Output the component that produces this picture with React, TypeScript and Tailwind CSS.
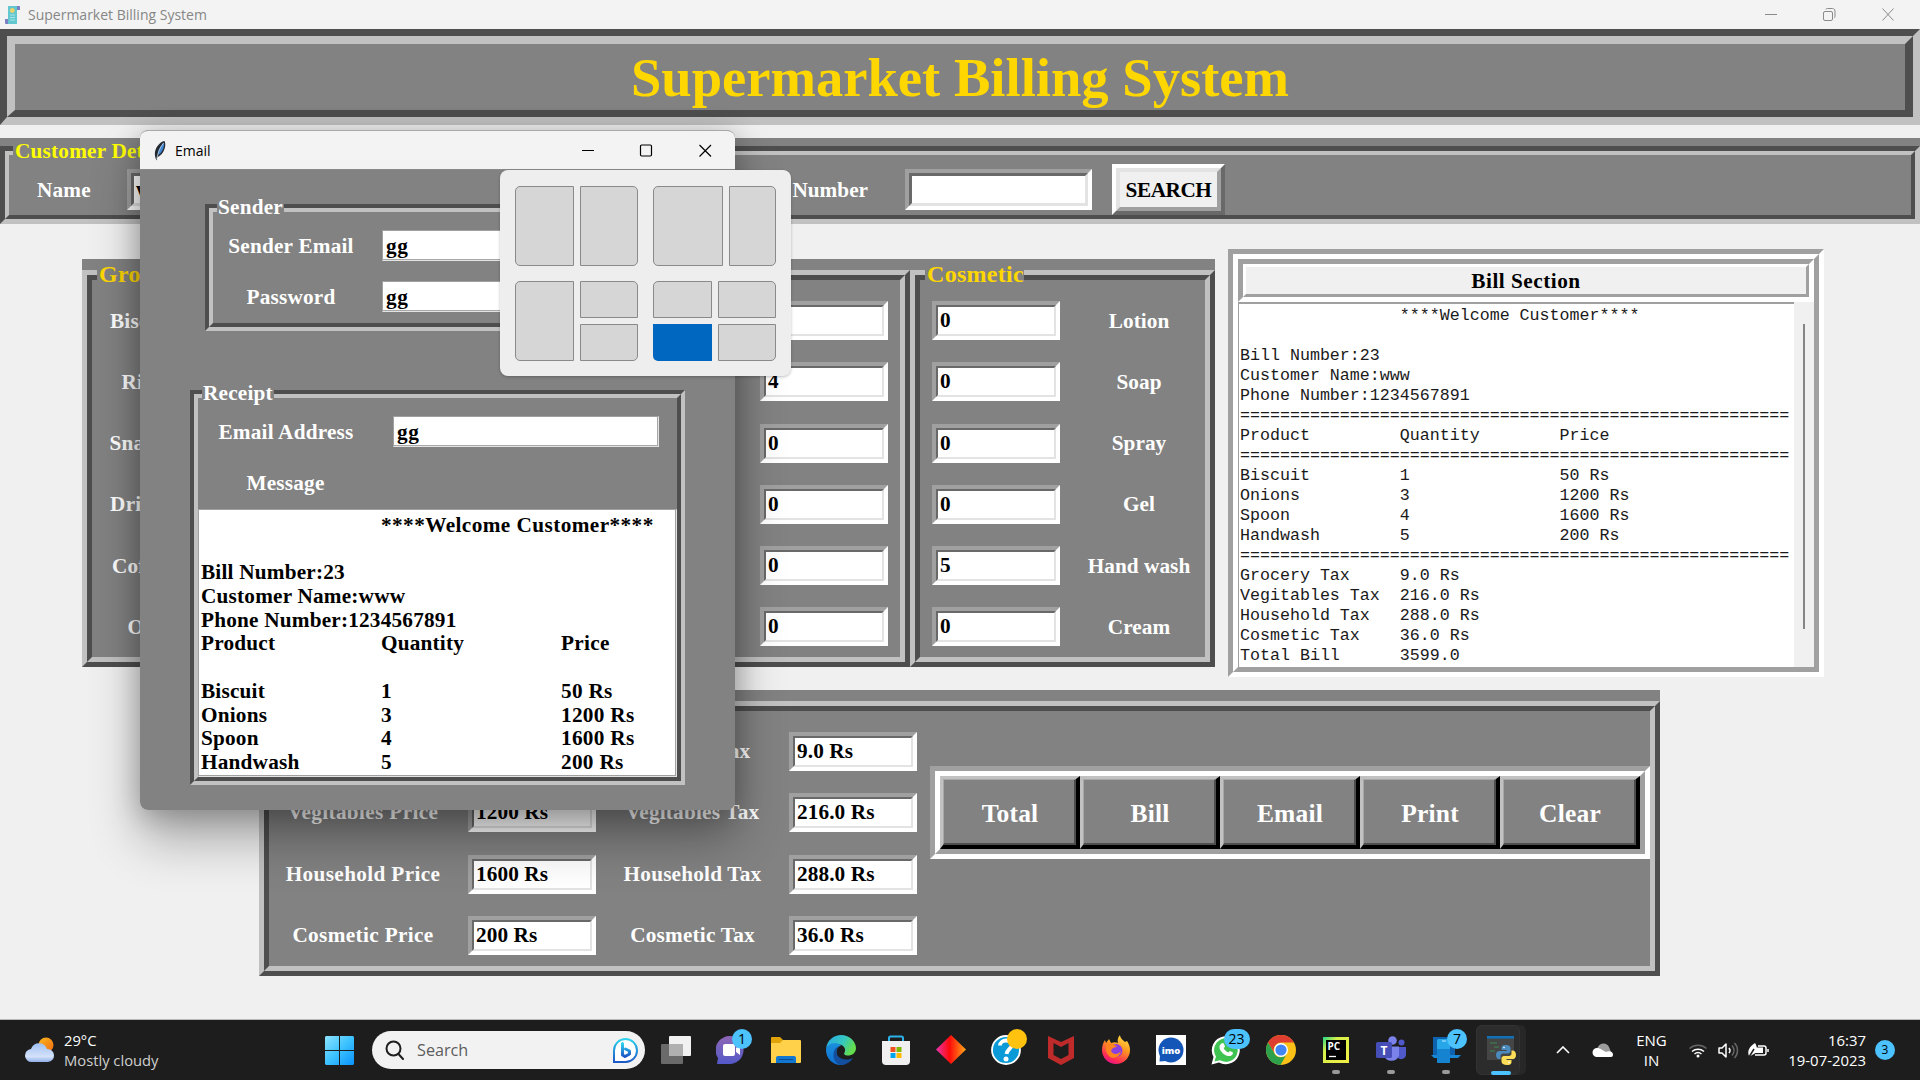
import React from "react";

type Kids = { children?: React.ReactNode };

/* ---------- bevelled boxes ---------- */

function Bevel({ outer, inner, className = "", body = "", children }: Kids & { outer: string; inner: string; className?: string; body?: string }) {
  return (
    <div className={`box-border ${outer} ${className}`}>
      <div className={`box-border h-full w-full ${inner} ${body}`}>{children}</div>
    </div>
  );
}

const sunkenOuter = "border-4 border-t-[#a0a0a0] border-l-[#a0a0a0] border-r-white border-b-white";

function Entry({ value = "", className = "" }: { value?: string; className?: string }) {
  return (
    <Bevel
      outer={sunkenOuter}
      inner="border-2 border-t-[#696969] border-l-[#696969] border-r-[#e3e3e3] border-b-[#e3e3e3]"
      className={`h-[39px] w-[128px] shrink-0 ${className}`}
      body="bg-white pl-[2px] leading-[26px] text-black whitespace-pre tracking-[0.1px]"
    >
      {value}
    </Bevel>
  );
}

function ThinEntry({ value, className }: { value: string; className: string }) {
  return (
    <div className={`h-[31px] shrink-0 border border-t-[#a0a0a0] border-l-[#a0a0a0] border-r-[#e3e3e3] border-b-[#e3e3e3] ${className}`}>
      <div className="h-full border-r border-b border-r-[#a8a8a8] border-b-[#a8a8a8] bg-white pl-[3px] leading-[30px] text-black tracking-[0.5px]">{value}</div>
    </div>
  );
}

const ridgeOuter = "border-[5px] border-t-[#c1c1c1] border-l-[#c1c1c1] border-r-[#4e4e4e] border-b-[#4e4e4e]";
const ridgeInner = "border-[5px] border-t-[#4e4e4e] border-l-[#4e4e4e] border-r-[#c1c1c1] border-b-[#c1c1c1]";

function RidgePanel({ title, className, body = "", children }: Kids & { title: string; className: string; body?: string }) {
  return (
    <div className={`relative bg-[#828282] pt-[11px] ${className}`}>
      <Bevel outer={ridgeOuter} inner={ridgeInner} className="h-full" body={body}>
        {children}
      </Bevel>
      {title && <span className="absolute left-[15px] top-[1px] bg-[#828282] pl-[2px] text-[24px] leading-[29px] tracking-[0.3px] text-[#ffd700]">{title}</span>}
    </div>
  );
}

function GroovePanel({ title, className, body = "", children }: Kids & { title: string; className: string; body?: string }) {
  return (
    <div className={`relative ${className}`}>
      <Bevel
        outer="border-4 border-t-[#4e4e4e] border-l-[#4e4e4e] border-r-[#c1c1c1] border-b-[#c1c1c1]"
        inner="border-4 border-t-[#c1c1c1] border-l-[#c1c1c1] border-r-[#4e4e4e] border-b-[#4e4e4e]"
        className="h-full"
        body={body}
      >
        {children}
      </Bevel>
      <span className="absolute left-[12px] -top-[9px] bg-[#828282] px-[1px] leading-[25px]">{title}</span>
    </div>
  );
}

/* ---------- main window ---------- */

function TitleBar() {
  return (
    <div className="flex h-[29px] items-center bg-[#f3f3f3] font-['Open_Sans',sans-serif] text-[14px] font-normal tracking-normal text-[#868686]">
      <svg className="ml-[5px] h-5 w-[15px]" viewBox="0 0 15 20">
        <path d="M3 1h11a1 1 0 0 1 1 1v3h-3v14H3z" fill="#63c7cf" />
        <path d="M12 1h2a1 1 0 0 1 1 1v3h-3zM0 14h3v5H1a1 1 0 0 1-1-1z" fill="#7d7fc4" />
        <circle cx="7.3" cy="5.5" r="2.4" fill="#ecd26b" />
        <path d="M5 10h5M5 12.5h5M5 15h5" stroke="#a9e6e8" strokeWidth="1" />
      </svg>
      <span className="ml-2">Supermarket Billing System</span>
      <svg className="ml-auto mr-[26px] h-[13px] w-[130px]" viewBox="0 0 130 13" fill="none" stroke="#8a8a8a">
        <path d="M1 6.5h12M118.5 .5l11 12M129.500 .5l-11 12" />
        <rect x="59.500" y="3.500" width="9" height="9" rx="1.500" />
        <path d="M62 1.500c0-1 .5-1 1.500-1h5c1.500 0 2.500 1 2.500 2.500v5c0 1 0 1.500-1 1.500" />
      </svg>
    </div>
  );
}

function CustomerBar() {
  return (
    <div className="relative mt-[13px] h-[86px] bg-[#828282] pt-2">
      <Bevel
        outer="border-[5px] border-t-[#4e4e4e] border-l-[#4e4e4e] border-r-[#c1c1c1] border-b-[#c1c1c1]"
        inner="border-4 border-t-[#c1c1c1] border-l-[#c1c1c1] border-r-[#4e4e4e] border-b-[#4e4e4e]"
        className="h-full"
        body="flex items-start text-white"
      >
        <span className="ml-[28px] mt-[23px] w-[90px] leading-[24px]">Name</span>
        <Bevel outer={sunkenOuter} inner="border-[3px] border-t-[#696969] border-l-[#696969] border-r-[#e3e3e3] border-b-[#e3e3e3]" className="mt-[14px] h-[41px] w-[187px]" body="bg-white pl-[2px] leading-[27px] text-black">
          www
        </Bevel>
        <span className="ml-[400px] mt-[23px] w-[154px] whitespace-nowrap text-right leading-[24px] tracking-normal">Bill Number</span>
        <Bevel outer={sunkenOuter} inner="border-[3px] border-t-[#696969] border-l-[#696969] border-r-[#e3e3e3] border-b-[#e3e3e3]" className="ml-[37px] mt-[14px] h-[41px] w-[187px]" body="bg-white" />
        <Bevel
          outer="border-4 border-t-white border-l-white border-r-[#696969] border-b-[#696969]"
          inner="border-4 border-t-[#e3e3e3] border-l-[#e3e3e3] border-r-[#a0a0a0] border-b-[#a0a0a0]"
          className="ml-[20px] mt-[9px] h-[51px] w-[113px]"
          body="bg-[#f0f0f0] text-center leading-[36px] text-black tracking-[-0.45px]"
        >
          SEARCH
        </Bevel>
      </Bevel>
      <span className="absolute left-[13px] top-[1px] bg-[#828282] px-[2px] leading-[24px] text-[#ffff00]">Customer Details</span>
    </div>
  );
}

const groceries = ["Biscuit", "Rice", "Snacks", "Drinks", "Coffee", "Oil"];
const household = ["0", "4", "0", "0", "0", "0"];
const cosmetics: [string, string][] = [["0", "Lotion"], ["0", "Soap"], ["0", "Spray"], ["0", "Gel"], ["5", "Hand wash"], ["0", "Cream"]];

function ProductPanels() {
  return (
    <div className="flex h-[408px] text-white">
      <RidgePanel title="Grocery" className="w-[520px]" body="flex flex-col pt-[21px] gap-[22.25px]">
        {groceries.map((g) => (
          <div key={g} className="flex h-[39px] items-center">
            <span className="w-[100px] pt-[2px] text-center">{g}</span>
            <Entry value="1" />
          </div>
        ))}
      </RidgePanel>
      <RidgePanel title="Household" className="w-[308px]" body="flex flex-col items-end pr-3 pt-[21px] gap-[22.25px]">
        {household.map((v, i) => (
          <Entry key={i} value={v} />
        ))}
      </RidgePanel>
      <RidgePanel title="Cosmetic" className="w-[305px]" body="flex flex-col pl-3 pt-[21px] gap-[22.25px]">
        {cosmetics.map(([v, l]) => (
          <div key={l} className="flex h-[39px] items-center">
            <Entry value={v} />
            <span className="ml-[13px] w-[132px] pt-[2px] text-center tracking-[0.05px]">{l}</span>
          </div>
        ))}
      </RidgePanel>
    </div>
  );
}

const rule = "=".repeat(55);
const row = (a: string, b: string, c = "") => a.padEnd(16) + (c ? b.padEnd(16) : b) + c;
const billText = [
  row("", "****Welcome Customer****"),
  "",
  "Bill Number:23",
  "Customer Name:www",
  "Phone Number:1234567891",
  rule,
  row("Product", "Quantity", "Price"),
  rule,
  row("Biscuit", "1", "50 Rs"),
  row("Onions", "3", "1200 Rs"),
  row("Spoon", "4", "1600 Rs"),
  row("Handwash", "5", "200 Rs"),
  rule,
  row("Grocery Tax", "9.0 Rs"),
  row("Vegitables Tax", "216.0 Rs"),
  row("Household Tax", "288.0 Rs"),
  row("Cosmetic Tax", "36.0 Rs"),
  row("Total Bill", "3599.0"),
].join("\n");

const grooveOuter = "border-[5px] border-t-[#a0a0a0] border-l-[#a0a0a0] border-r-white border-b-white";
const grooveInner = "border-[5px] border-t-white border-l-white border-r-[#a0a0a0] border-b-[#a0a0a0]";

function BillSection() {
  return (
    <Bevel outer={grooveOuter} inner={grooveInner} className="ml-[13px] h-[428px] w-[596px]" body="flex flex-col">
      <Bevel
        outer={grooveOuter}
        inner="border-[3px] border-t-white border-l-white border-r-[#a0a0a0] border-b-[#a0a0a0]"
        className="h-[43px] w-full"
        body="bg-[#f0f0f0] text-center leading-[29px] text-black tracking-[0.5px]"
      >
        Bill Section
      </Bevel>
      <div className="flex min-h-0 grow">
        <pre className="w-[556px] overflow-hidden border-t-2 border-l border-t-[#a0a0a0] border-l-[#a0a0a0] bg-white pl-[1px] pt-[2px] font-['Liberation_Mono',monospace] text-[16.650px] font-normal leading-[20px] tracking-normal text-[#1a1a1a]">{billText}</pre>
        <div className="flex grow justify-center bg-[#f0f0f0] pt-[22px]">
          <div className="h-[305px] w-[2px] bg-[#858585]" />
        </div>
      </div>
    </Bevel>
  );
}

const totals: [string, string, string, string][] = [
  ["Grocery Price", "50 Rs", "Grocery Tax", "9.0 Rs"],
  ["Vegitables Price", "1200 Rs", "Vegitables Tax", "216.0 Rs"],
  ["Household Price", "1600 Rs", "Household Tax", "288.0 Rs"],
  ["Cosmetic Price", "200 Rs", "Cosmetic Tax", "36.0 Rs"],
];

function BillMenu() {
  return (
    <RidgePanel title="Bill Menu" className="ml-[259px] mt-[13px] h-[286px] w-[1401px] text-white" body="flex items-start">
      <div className="flex flex-col gap-[22.25px] pt-[21px]">
        {totals.map(([a, b, c, d]) => (
          <div key={a} className="flex h-[39px] items-center">
            <span className="w-[188px] pt-[1px] text-center tracking-[0.35px]">{a}</span>
            <Entry value={b} className="ml-[11px]" />
            <span className="w-[193px] pt-[1px] text-center tracking-[0.2px]">{c}</span>
            <Entry value={d} />
          </div>
        ))}
      </div>
      <Bevel outer={grooveOuter} inner={grooveInner} className="ml-[13px] mt-[55px] h-[93px] w-[720px]" body="flex">
        {["Total", "Bill", "Email", "Print", "Clear"].map((b) => (
          <Bevel
            key={b}
            outer="border-t-[3px] border-l-[3px] border-r-4 border-b-4 border-t-[#c1c1c1] border-l-[#c1c1c1] border-r-black border-b-black"
            inner="border-t border-l border-r-2 border-b-2 border-t-[#a8a8a8] border-l-[#a8a8a8] border-r-[#4e4e4e] border-b-[#4e4e4e]"
            className="h-full flex-1"
            body="bg-[#828282] pl-[2px] text-center text-[25.500px] leading-[67px]"
          >
            {b}
          </Bevel>
        ))}
      </Bevel>
    </RidgePanel>
  );
}

/* ---------- e-mail dialog ---------- */

const mailRows: [string, string, string][] = [
  ["", "****Welcome Customer****", ""],
  ["", "", ""],
  ["Bill Number:23", "", ""],
  ["Customer Name:www", "", ""],
  ["Phone Number:1234567891", "", ""],
  ["Product", "Quantity", "Price"],
  ["", "", ""],
  ["Biscuit", "1", "50 Rs"],
  ["Onions", "3", "1200 Rs"],
  ["Spoon", "4", "1600 Rs"],
  ["Handwash", "5", "200 Rs"],
];

function EmailDialog() {
  return (
    <div className="absolute left-[140px] top-[130px] flex h-[680px] w-[595px] flex-col overflow-hidden rounded-[8px] border-t border-t-[#a8a8a8] bg-[#828282] text-white">
      <div className="flex h-[39px] shrink-0 items-center border-b border-b-[#8a8a8a] bg-[#f3f3f3] font-['Open_Sans',sans-serif] text-[14px] font-normal tracking-normal text-black">
        <svg className="ml-[13px] h-[21px] w-[14px]" viewBox="0 0 14 21">
          <path d="M11.500 1c1.500 3 .8 8-2 12-1.500 2-3.500 3.500-5 4L3.500 20.500C1 15 1.500 10 4.500 6 6.500 3.500 9 1 11.500 1z" fill="#242a33" />
          <path d="M11 2.500c.5 3-.5 7-3 10-1 1.400-2 2-3 2.500 0-4 1.500-8 6-12.500z" fill="#3f86d6" />
          <path d="M10.500 3C7 7.500 5 12 3.800 19" stroke="#cfd8e2" strokeWidth=".8" fill="none" />
        </svg>
        <span className="ml-[8px]">Email</span>
        <svg className="ml-auto mr-[23px] h-[13px] w-[131px]" viewBox="0 0 131 13" fill="none" stroke="#000" strokeWidth="1.200">
          <path d="M1 6.500h12" />
          <rect x="59.500" y="1" width="11" height="11" rx="1.200" />
          <path d="M118.500 1l11.500 11.500M130 1l-11.500 11.500" />
        </svg>
      </div>
      <GroovePanel title="Sender" className="ml-[65px] mt-[34px] h-[127px] w-[450px]" body="flex flex-col gap-[20px] pt-[18px]">
        <div className="flex h-[31px] items-center">
          <span className="w-[156px] pt-[2px] text-center">Sender Email</span>
          <ThinEntry value="gg" className="ml-[13px] w-[260px]" />
        </div>
        <div className="flex h-[31px] items-center">
          <span className="w-[156px] pt-[2px] text-center">Password</span>
          <ThinEntry value="gg" className="ml-[13px] w-[260px]" />
        </div>
      </GroovePanel>
      <GroovePanel title="Receipt" className="ml-[50px] mt-[59px] h-[395px] w-[495px]" body="flex flex-col">
        <div className="mt-[18px] flex h-[31px] items-center">
          <span className="w-[176px] pt-[2px] text-center">Email Address</span>
          <ThinEntry value="gg" className="ml-[19px] w-[266px]" />
        </div>
        <div className="mt-[21px] w-[175px] text-center leading-[31px]">Message</div>
        <div className="mt-auto h-[268px] border border-t-[#a0a0a0] border-l-[#a0a0a0] border-r-[#e3e3e3] border-b-[#e3e3e3]">
          <div className="flex h-full flex-col border-r border-b border-r-[#a0a0a0] border-b-[#a0a0a0] bg-white pl-[2px] pt-[2.500px] text-black">
            {mailRows.map(([a, b, c], i) => (
              <div key={i} className="flex h-[23.75px] whitespace-nowrap leading-[24px]">
                <span className="w-[180px]">{a}</span>
                <span className={b.startsWith("*") ? "w-[180px] tracking-[0.420px]" : "w-[180px]"}>{b}</span>
                <span className="tracking-[0.300px]">{c}</span>
              </div>
            ))}
          </div>
        </div>
      </GroovePanel>
    </div>
  );
}

function SnapPopup() {
  const cell = "border border-[#8a8a8a] bg-[#d6d6d6]";
  return (
    <div className="absolute left-[500px] top-[170px] grid h-[206px] w-[291px] grid-cols-[123px_123px] grid-rows-[80px_80px] gap-x-[15px] gap-y-[15px] rounded-[8px] bg-[#eee] pl-[15px] pt-4 shadow-[0_1px_3px_rgba(0,0,0,0.25)]">
      <div className="flex gap-1.5">
        <div className={`w-[59px] rounded-l-[5px] ${cell}`} />
        <div className={`grow rounded-r-[5px] ${cell}`} />
      </div>
      <div className="flex gap-1.5">
        <div className={`w-[70px] rounded-l-[5px] ${cell}`} />
        <div className={`grow rounded-r-[5px] ${cell}`} />
      </div>
      <div className="flex gap-1.5">
        <div className={`w-[59px] rounded-l-[5px] ${cell}`} />
        <div className="flex grow flex-col gap-1.5">
          <div className={`flex-1 rounded-tr-[5px] ${cell}`} />
          <div className={`flex-1 rounded-br-[5px] ${cell}`} />
        </div>
      </div>
      <div className="grid grid-cols-[59px_58px] grid-rows-2 gap-1.5">
        <div className={`rounded-tl-[5px] ${cell}`} />
        <div className={`rounded-tr-[5px] ${cell}`} />
        <div className="rounded-bl-[5px] bg-[#0067c0]" />
        <div className={`rounded-br-[5px] ${cell}`} />
      </div>
    </div>
  );
}

/* ---------- taskbar ---------- */

function TaskIcon({ children, badge, badgeClass = "", running = false }: Kids & { badge?: string; badgeClass?: string; running?: boolean }) {
  return (
    <div className="relative flex h-full w-[55px] shrink-0 items-center justify-center">
      <svg className="h-[30px] w-[30px]" viewBox="0 0 30 30">{children}</svg>
      {badge !== undefined && (
        <span className={`absolute top-[9px] flex h-5 items-center justify-center rounded-full text-[14px] leading-none text-black ${badgeClass}`}>{badge}</span>
      )}
      {running && <span className="absolute bottom-[6px] h-1 w-2 rounded-full bg-[#9a9a9a]" />}
    </div>
  );
}

function Taskbar() {
  return (
    <div className="flex h-[60px] items-center bg-[#1d1d1d] font-['Open_Sans',sans-serif] text-[14.500px] text-white">
      <svg className="ml-[24px] h-[28px] w-[32px]" viewBox="0 0 32 28">
        <defs>
          <linearGradient id="sun" x1="0" y1="0" x2="1" y2="1"><stop offset="0" stopColor="#fbb81f" /><stop offset="1" stopColor="#f06a12" /></linearGradient>
          <linearGradient id="cl" x1="0" y1="0" x2="0" y2="1"><stop offset="0" stopColor="#9fc0f3" /><stop offset=".7" stopColor="#d4e2fa" /><stop offset="1" stopColor="#8fb0ea" /></linearGradient>
        </defs>
        <circle cx="22" cy="9" r="7.500" fill="url(#sun)" />
        <path d="M8 26a6.500 6.500 0 0 1-1-13 8.500 8.500 0 0 1 16 0 6.500 6.500 0 0 1 1 13z" fill="url(#cl)" />
      </svg>
      <div className="ml-2 w-[261px] text-[14.750px] leading-5">
        <div>29°C</div>
        <div className="text-[#cfcfcf]">Mostly cloudy</div>
      </div>
      <svg className="h-[29px] w-[29px]" viewBox="0 0 29 29">
        <defs><linearGradient id="win" x1="0" y1="0" x2="1" y2="1"><stop offset="0" stopColor="#8fe3ff" /><stop offset=".5" stopColor="#3cc2ff" /><stop offset="1" stopColor="#0a93fb" /></linearGradient></defs>
        <path d="M1 0h13v14H0V1zM15 0h13l1 1v13H15zM0 15h14v14H1l-1-1zM15 15h14v13l-1 1H15z" fill="url(#win)" />
      </svg>
      <div className="ml-[18px] flex h-[38px] w-[273px] items-center rounded-full bg-[#f2f2f2] pl-[13px] pr-[6px] text-[16.200px] text-[#5c5c5c]">
        <svg className="h-5 w-5" viewBox="0 0 20 20" fill="none" stroke="#1f1f1f" strokeWidth="2"><circle cx="8.500" cy="8.500" r="7" /><path d="M13.500 14l4.500 5" strokeLinecap="round" /></svg>
        <span className="ml-3 pt-[1px]">Search</span>
        <svg className="ml-auto h-[27px] w-[27px]" viewBox="0 0 27 27">
          <defs><linearGradient id="bing" x1="0" y1="0" x2="0" y2="1"><stop offset="0" stopColor="#2fd3ee" /><stop offset="1" stopColor="#1b57c6" /></linearGradient></defs>
          <path d="M2 25V13.500A11.500 11.500 0 1 1 13.500 25z" fill="#fff" stroke="url(#bing)" strokeWidth="2" />
          <path d="M10.500 6.500v11.500l2.500 1.500 4.500-2.500v-3l-4-2" stroke="url(#bing)" strokeWidth="3" fill="none" strokeLinejoin="round" strokeLinecap="round" />
        </svg>
      </div>
      <div className="ml-[3.500px] flex h-full items-center">
        <TaskIcon>
          <rect x="8" y="1" width="22" height="20" rx="1" fill="#f1f1f1" /><rect x="0" y="9" width="22" height="20" rx="1" fill="#6a6a6a" /><rect x="8" y="9" width="14" height="12" fill="#b0b0b0" />
        </TaskIcon>
        <TaskIcon badge="1" badgeClass="left-[28.500px] w-5 bg-[#4cc2ff]">
          <defs><linearGradient id="chat" x1="0" y1="0" x2="0" y2="1"><stop offset="0" stopColor="#8e66b5" /><stop offset="1" stopColor="#5459c9" /></linearGradient></defs>
          <path d="M1 29l1-6A14 14 0 1 1 15 29z" fill="url(#chat)" /><rect x="7" y="9" width="12" height="12" rx="2" fill="#fff" /><path d="M20 13l4-3v10l-4-3z" fill="#fff" />
        </TaskIcon>
        <TaskIcon>
          <path d="M0 3a1 1 0 0 1 1-1h8l3 3v4H0z" fill="#e0a30a" /><path d="M0 8h9l3-3h17a1 1 0 0 1 1 1v21a1 1 0 0 1-1 1H0z" fill="#ffd04a" /><path d="M5 28v-5a2 2 0 0 1 2-2h16a2 2 0 0 1 2 2v5z" fill="#1277d0" /><path d="M8 24.500h14" stroke="#0a4c92" />
        </TaskIcon>
        <TaskIcon>
          <defs>
            <linearGradient id="e1" x1="0" y1="0" x2="1" y2=".4"><stop offset="0" stopColor="#2aa8e8" /><stop offset=".6" stopColor="#35c7c0" /><stop offset="1" stopColor="#63dc4e" /></linearGradient>
            <linearGradient id="e2" x1="0" y1="0" x2="0" y2="1"><stop offset="0" stopColor="#1a90dd" /><stop offset="1" stopColor="#0f6fd0" /></linearGradient>
          </defs>
          <path d="M0 14C1 5 8 0 15 0c9 0 15 7 15 13 0 5-4 7.500-8 7.500-3.500 0-4.500-1.500-3.500-3 2-3-.5-8-7-8.500C5 8.700 1 11 0 14z" fill="url(#e1)" />
          <path d="M0 15c0-4 4-7 9-7 3 0 5 1 6 2.500-3.500 1-5 4-4.500 8C11 25 16 30 19 29.500 8 32 0 24 0 15z" fill="url(#e2)" />
          <path d="M13 11.500c-3 2-3.500 6-1.500 9 3 4 9 5.500 15.500 2.500-2.500 4-7 7-12 7-5-1-8-6-7.500-11 .3-4 2.500-7 5.500-7.500z" fill="#134f9e" />
        </TaskIcon>
        <TaskIcon>
          <path d="M8 7V3a1.500 1.500 0 0 1 1.500-1.500h11A1.500 1.500 0 0 1 22 3v4" fill="none" stroke="#2cb1e8" strokeWidth="2" /><path d="M1 6h28v20a4 4 0 0 1-4 4H5a4 4 0 0 1-4-4z" fill="#f0f0f0" />
          <path d="M9.500 12h5v5h-5z" fill="#f25022" /><path d="M15.500 12h5v5h-5z" fill="#7fba00" /><path d="M9.500 18h5v5h-5z" fill="#00a4ef" /><path d="M15.500 18h5v5h-5z" fill="#ffb900" />
        </TaskIcon>
        <TaskIcon>
          <defs><linearGradient id="dia"><stop offset="0" stopColor="#e835b0" /><stop offset=".45" stopColor="#ff0a0a" /><stop offset="1" stopColor="#ffa81a" /></linearGradient></defs>
          <path d="M15 0l15 14.500L15 29 0 14.500z" fill="url(#dia)" />
        </TaskIcon>
        <TaskIcon badge="" badgeClass="left-[28.500px] w-5 bg-[#ffc20e]">
          <circle cx="15" cy="15" r="14" fill="#0a9ad8" stroke="#fff" strokeWidth="1.800" />
          <path d="M9 10.500c0-3 3-5 6-5s6 1.500 6 4.500-5 4.500-5.500 9" fill="none" stroke="#fff" strokeWidth="3.800" /><circle cx="15" cy="24" r="2.500" fill="#fff" />
        </TaskIcon>
        <TaskIcon>
          <path d="M2 1l13 6 13-6v22l-13 7-13-7zM7.500 8v12l7.500 4 7.500-4V8L15 12z" fill="#bf2b2b" fillRule="evenodd" />
        </TaskIcon>
        <TaskIcon>
          <defs><linearGradient id="ff" x1=".8" y1="0" x2=".3" y2="1"><stop offset="0" stopColor="#ffe24a" /><stop offset=".4" stopColor="#ff9a1f" /><stop offset=".8" stopColor="#ff2f52" /><stop offset="1" stopColor="#e3128a" /></linearGradient></defs>
          <path d="M19 0c0 3 3 5 5 7l2-1c2 3 3 6 3 9a14 14 0 0 1-28 0c0-4 1-7 3-10l1 3 3-4 2 4c3-1 5-1 7 0-1-3 0-6 2-8z" fill="url(#ff)" /><circle cx="15" cy="15.500" r="6.500" fill="#8a3fe0" /><path d="M5 10c4-3 8-1 11 2-3 0-5 1-6 4 2 4 7 4 10 0-1 6-8 9-12 5-3-3-4-7-3-11z" fill="#ff8420" />
        </TaskIcon>
        <TaskIcon>
          <rect width="30" height="30" fill="#fff" /><circle cx="15" cy="15" r="12.500" fill="#1456b8" /><path d="M4 20l-.5 6.500L10 26z" fill="#1456b8" />
          <text x="15" y="18.500" textAnchor="middle" fontFamily="Open Sans" fontWeight="800" fontSize="9.500" fill="#fff">imo</text>
        </TaskIcon>
        <TaskIcon badge="23" badgeClass="left-[25px] w-[26px] bg-[#4cc2ff]">
          <path d="M.500 29.500l2-7.500A14 14 0 1 1 8 27.500z" fill="#fff" /><path d="M3.500 26.500l1.500-5A11.800 11.800 0 1 1 9 25.300z" fill="#3fc351" />
          <path d="M10 9c1-1.500 2.500-1 3 0l1 2.500-1.200 1.800c1 2 2.500 3.500 4.500 4.200l1.700-1.500 3 1.500c0 3-3 4-5 3.500-5-1.200-9-6-8.500-9.500 0-1 .7-1.800 1.500-2.500z" fill="#fff" />
        </TaskIcon>
        <TaskIcon>
          <circle cx="15" cy="15" r="15" fill="#fbc116" /><path d="M2 7.500A15 15 0 0 1 28 7.500H15a7.500 7.500 0 0 0-6.500 11z" fill="#dd3e30" />
          <path d="M2 7.500A15 15 0 0 0 14.500 30l6.500-11.500a7 7 0 0 1-12.500 0z" fill="#2da04c" /><circle cx="15" cy="15" r="7" fill="#fff" /><circle cx="15" cy="15" r="5.600" fill="#4285f4" />
        </TaskIcon>
        <TaskIcon running>
          <defs><linearGradient id="pc" x1="0" y1="0" x2="1" y2="1"><stop offset="0" stopColor="#21d789" /><stop offset=".3" stopColor="#d6f04a" /><stop offset="1" stopColor="#f2ee45" /></linearGradient></defs>
          <rect x="2" y="2" width="26" height="26" fill="url(#pc)" /><rect x="5" y="5" width="20" height="20" fill="#000" /><text x="6.500" y="15" fontFamily="Open Sans" fontWeight="700" fontSize="10" fill="#fff">PC</text><path d="M8 21.500h7" stroke="#fff" strokeWidth="1.300" />
        </TaskIcon>
        <TaskIcon running>
          <circle cx="25.500" cy="7.500" r="3" fill="#5059c9" /><circle cx="16.500" cy="5.500" r="4.300" fill="#7b83eb" /><path d="M21 12h9v8a5 5 0 0 1-9 2z" fill="#5059c9" /><path d="M8 11.500h15v9a8 8 0 0 1-15 0z" fill="#7b83eb" /><rect x="0" y="7" width="16" height="16" rx="1.500" fill="#464eb8" />
          <text x="8" y="19.500" textAnchor="middle" fontFamily="Open Sans" fontWeight="700" fontSize="12" fill="#fff">T</text>
        </TaskIcon>
        <TaskIcon badge="7" badgeClass="left-[28.500px] w-5 bg-[#4cc2ff]" running>
          <path d="M2 2h22v18H2z" fill="#0f62ad" /><path d="M0 20h30l-3 3H3z" fill="#1787d6" /><rect x="6" y="4" width="13" height="24" rx="1.500" fill="#27a7ea" /><path d="M6 14h13v12a2 2 0 0 1-2 2H8a2 2 0 0 1-2-2z" fill="#1583d0" /><path d="M11 6h4" stroke="#bfe9ff" />
        </TaskIcon>
      </div>
      <div className="ml-[2px] flex h-[50px] w-[50px] rounded-[6px] bg-[#272727]">
        <div className="relative flex w-11 items-center justify-center rounded-[6px] border border-[#333] bg-[#2c2c2c] pl-[6px]">
          <svg className="h-[30px] w-[30px]" viewBox="0 0 30 30">
            <rect x="1" y="1" width="27" height="24" fill="#454545" /><rect x="1" y="1" width="27" height="2.500" fill="#1170b8" /><path d="M4 8h7M8 12h5M4 16h5" stroke="#3c8a4a" strokeWidth="1.200" />
            <path d="M20 10c-4 0-4.500 1.500-4.500 3v2h5v1h-7c-2.500 0-3.500 2-3.500 4s1 4 3 4h1.500v-3c0-1.500 1-2.500 2.500-2.500h5c1.500 0 2.500-1 2.500-2.500v-3c0-2-2-3-4.500-3z" fill="#4b8bbe" />
            <path d="M21 30c4 0 4.500-1.500 4.500-3v-2h-5v-1h6.500c2 0 3-2 3-4s-1-4.500-3-4.500h-1.500v3c0 1.500-1 2.500-2.500 2.500h-5c-1.500 0-2.500 1-2.500 2.500v3c0 2 2 3.500 5.500 3.500z" fill="#ffde57" />
            <circle cx="18" cy="12.500" r=".8" fill="#fff" /><circle cx="23" cy="27.500" r=".8" fill="#fff" />
          </svg>
          <span className="absolute -bottom-px left-[14px] h-1 w-5 rounded-full bg-[#4cc2ff]" />
        </div>
      </div>
      <svg className="ml-[30px] h-2 w-[14px]" viewBox="0 0 14 8" fill="none" stroke="#fff" strokeWidth="1.600"><path d="M1 7l6-6 6 6" /></svg>
      <svg className="ml-[22px] h-4 w-[22px]" viewBox="0 0 22 16"><path d="M5 12a6 6 0 0 1 1-7A6 6 0 0 1 17 5l2 5z" fill="#9c9c9c" /><path d="M5 15a4.500 4.500 0 0 1 0-9c2 0 3 .5 4.500 1.500L14 10c4-2 7 0 7 2.500S19.500 15 18 15z" fill="#fff" /></svg>
      <div className="ml-[14px] w-[48px] text-center text-[15px] leading-[20px]"><div>ENG</div><div>IN</div></div>
      <svg className="ml-[12px] h-5 w-[82px]" viewBox="0 0 82 20" fill="none" stroke="#fff" strokeWidth="1.500">
        <path d="M1.500 8.500a13 13 0 0 1 17 0" stroke="#666" /><path d="M4 11.500a9 9 0 0 1 12 0M6.500 14a5.500 5.500 0 0 1 7 0" /><circle cx="10" cy="16" r="1.500" fill="#fff" stroke="none" />
        <path d="M31 8h3l4-4v13l-4-4h-3zM41 8c1.200 1.500 1.200 3.500 0 5" strokeLinejoin="round" /><path d="M44 5.500c2.500 3 2.500 7 0 10M46.500 3c4 4 4 11 0 15" stroke="#666" />
        <path d="M70 6h6a2 2 0 0 1 2 2v5a2 2 0 0 1-2 2h-9M80 9v3" /><path d="M61 16c-2-5 0-9 6-13 3 5 3 10-3 12l-3 2zM68 7.500h7v5.500h-9z" fill="#fff" stroke="none" /><path d="M61 17l5-8" stroke="#1d1d1d" />
      </svg>
      <div className="ml-auto text-right text-[14.900px] leading-5"><div>16:37</div><div>19-07-2023</div></div>
      <div className="ml-[9px] mr-[25px] flex h-5 w-5 items-center justify-center rounded-full bg-[#4cc2ff] text-[12px] text-black">3</div>
    </div>
  );
}

export default function App() {
  return (
    <div className="relative h-[1080px] w-[1920px] overflow-hidden bg-[#f0f0f0] font-['Liberation_Serif',serif] text-[21.250px] font-bold tracking-[0.2px]">
      <div className="flex h-[1020px] flex-col border-b border-b-[#b8b8b8]">
        <TitleBar />
        <Bevel
          outer="border-x-[7px] border-t-[7px] border-b-8 border-t-[#4e4e4e] border-l-[#4e4e4e] border-r-[#c1c1c1] border-b-[#c1c1c1]"
          inner="border-8 border-b-[7px] border-t-[#c1c1c1] border-l-[#c1c1c1] border-r-[#4e4e4e] border-b-[#4e4e4e]"
          className="h-[96px] shrink-0"
          body="bg-[#828282] text-center text-[54.600px] leading-[68px] tracking-normal text-[#ffd700]"
        >
          Supermarket Billing System
        </Bevel>
        <CustomerBar />
        <div className="ml-[82px] mt-[25px] flex items-start">
          <div className="mt-[10px]"><ProductPanels /></div>
          <BillSection />
        </div>
        <BillMenu />
      </div>
      <div className="absolute left-[140px] top-[130px] h-[680px] w-[595px] rounded-[8px] shadow-[0_30px_50px_rgba(0,0,0,0.3),0_4px_28px_rgba(0,0,0,0.24)]" />
      <EmailDialog />
      <SnapPopup />
      <div className="relative font-normal tracking-normal"><Taskbar /></div>
    </div>
  );
}
